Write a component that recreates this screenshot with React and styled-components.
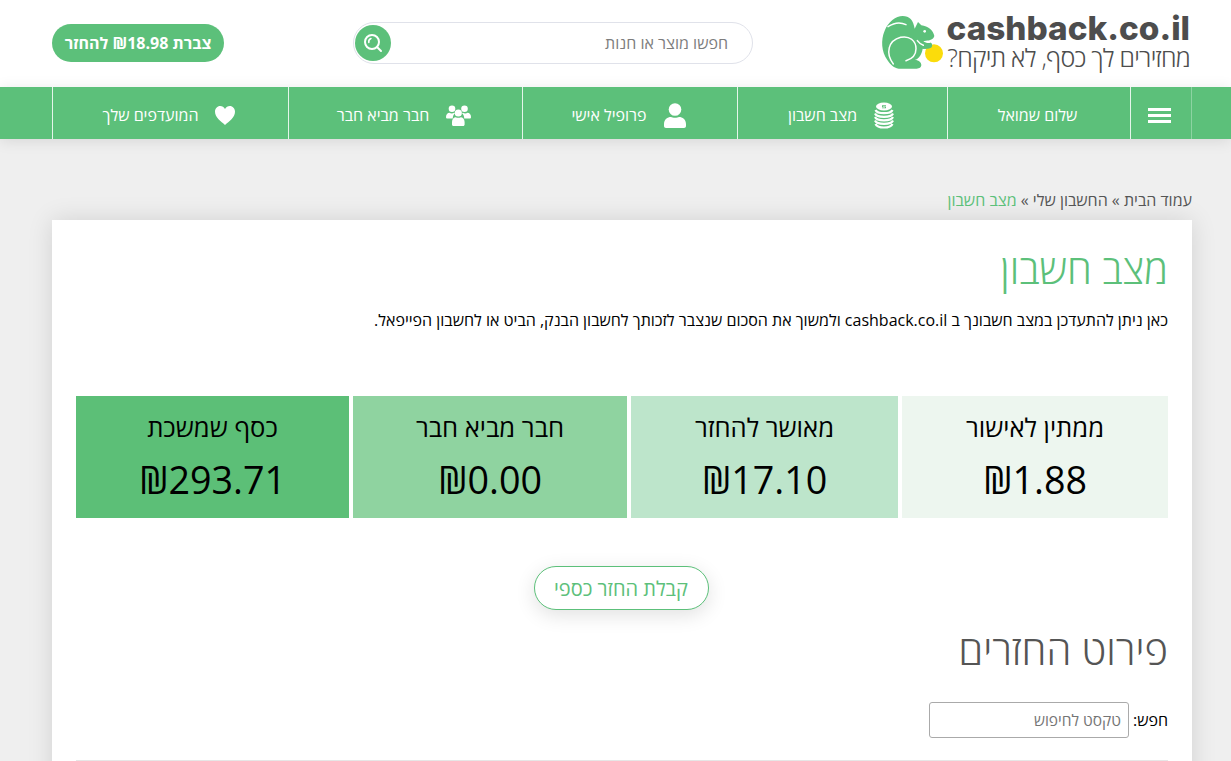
import React from 'react'
import styled, { createGlobalStyle } from 'styled-components'

const green = '#5cc07a'
const font = `"Open Sans", "Noto Sans", "Liberation Sans", sans-serif`

const Global = createGlobalStyle`
  html, body { margin: 0; padding: 0; height: 761px; overflow: hidden; background: #efefef; }
  body { font-family: ${font}; font-size: 16px; color: #000; }
  * { box-sizing: border-box; }
`

const Page = styled.div`
  direction: rtl;
  width: 1231px;
  height: 761px;
  overflow: hidden;
`

const Container = styled.div`
  width: 1140px;
  margin-right: 39px;
  display: flex;
  align-items: center;
`

const Header = styled.header`
  height: 87px;
  background: #fff;
  & > div { height: 87px; justify-content: space-between; }
`

const Logo = styled.a`
  display: flex;
  align-items: flex-start;
  width: 310px;
  height: 87px;
  direction: ltr;
`

const LogoMark = styled.svg`
  width: 64px;
  height: 65px;
  margin: 10px 0 0 -2px;
  flex: none;
`

const LogoText = styled.div`
  display: flex;
  flex-direction: column;
  align-items: flex-end;
  margin-left: 3px;
  width: 243px;
`

const LogoName = styled.span`
  font-family: Inter, "Open Sans", sans-serif;
  font-weight: 800;
  font-size: 33.3px;
  line-height: 28px;
  height: 28px;
  margin-top: 14px;
  color: #4d4d4d;
  white-space: nowrap;
`

const LogoSlogan = styled.span`
  font-weight: 300;
  font-size: 25px;
  line-height: 28px;
  margin-top: 1px;
  letter-spacing: -0.72px;
  color: #4d4d4d;
  direction: rtl;
  white-space: nowrap;
`

const Search = styled.form`
  width: 400px;
  height: 42px;
  margin-top: -1px;
  border: 1px solid #e0e2ea;
  border-radius: 21px;
  background: #fff;
  display: flex;
  align-items: center;
  justify-content: space-between;
  padding: 0 24px 0 1px;
`

const SearchText = styled.span`
  font-size: 16px;
  color: #7d7d7d;
`

const SearchButton = styled.span`
  width: 36px;
  height: 36px;
  border-radius: 50%;
  background: ${green};
  display: flex;
  align-items: center;
  justify-content: center;
`

const Balance = styled.a`
  width: 172px;
  height: 38px;
  margin-top: -1px;
  border-radius: 19px;
  background: ${green};
  color: #fff;
  font-weight: 700;
  font-size: 16px;
  display: flex;
  align-items: center;
  justify-content: center;
  white-space: nowrap;
`

const Nav = styled.nav`
  height: 52px;
  background: ${green};
  box-shadow: 0 2px 14px rgba(0, 0, 0, 0.1);
  & > div { height: 52px; align-items: stretch; border-right: 1px solid rgba(255, 255, 255, 0.3); }
`

const NavItem = styled.a`
  width: ${p => p.$w}px;
  flex: none;
  display: flex;
  align-items: center;
  justify-content: center;
  gap: 17px;
  padding: 4px 3px 0 0;
  color: #fff;
  font-size: 16px;
  border-left: 1px solid #e5f5ea;
  svg { flex: none; }
`

const Burger = styled.span`
  width: 23px;
  height: 15px;
  border-top: 3px solid #fff;
  border-bottom: 3px solid #fff;
  position: relative;
  &::after {
    content: '';
    position: absolute;
    left: 0;
    right: 0;
    top: 3px;
    height: 3px;
    background: #fff;
  }
`

const Crumbs = styled.div`
  height: 81px;
  padding-top: 50px;
  font-size: 16px;
  line-height: 22px;
  color: #555;
  width: 1140px;
  margin-right: 39px;
  white-space: nowrap;
`

const Current = styled.span`
  color: ${green};
`

const Card = styled.main`
  width: 1140px;
  margin-right: 39px;
  height: 600px;
  background: #fff;
  box-shadow: 0 0 24px rgba(0, 0, 0, 0.12);
  padding: 24px 24px 0;
`

const Title = styled.h1`
  margin: 0;
  font-weight: 300;
  font-size: 40px;
  line-height: 50px;
  color: ${p => p.$muted ? '#555' : green};
`

const Intro = styled.p`
  margin: 14px 0 0;
  font-size: 16px;
  line-height: 24px;
  color: #000;
`

const Stats = styled.div`
  display: flex;
  gap: 4px;
  margin-top: 64px;
`

const Stat = styled.div`
  width: ${p => p.$w}px;
  height: 122px;
  background: ${p => p.$bg};
  text-align: center;
  padding-top: 14px;
  color: #000;
`

const StatLabel = styled.div`
  font-size: 25.6px;
  line-height: 36px;
`

const StatValue = styled.div`
  font-size: 37.7px;
  line-height: 50px;
  margin-top: 9px;
`

const Action = styled.div`
  display: flex;
  justify-content: center;
  margin-top: 48px;
`

const Withdraw = styled.a`
  width: 175px;
  height: 44px;
  margin-right: 2px;
  border: 1px solid ${green};
  border-radius: 22px;
  background: #fff;
  color: ${green};
  font-size: 20px;
  display: flex;
  align-items: center;
  justify-content: center;
  box-shadow: 0 5px 20px rgba(0, 0, 0, 0.12);
`

const SubTitle = styled(Title)`
  margin-top: 15px;
`

const Filter = styled.label`
  display: flex;
  align-items: center;
  gap: 4px;
  margin-top: 27px;
  font-size: 16px;
  height: 36px;
`

const FilterInput = styled.input`
  width: 200px;
  height: 36px;
  border: 1px solid #aaa;
  border-radius: 3px;
  padding: 0 7px;
  font: 15.5px ${font};
  direction: rtl;
  &::placeholder { color: #757575; }
`

const Divider = styled.div`
  height: 1px;
  background: #e6e6e6;
  margin-top: 22px;
`

const Squirrel = () => (
  <LogoMark viewBox="0 0 192 195">
    <path fill={green} d="M22 150C4 125 2 90 14 62 24 36 48 18 68 18 88 18 100 30 104 56L114 36 124 46C144 48 160 62 163 78 160 88 150 92 138 92L130 94C136 100 146 100 152 98 160 104 158 116 142 116L128 116C126 130 118 146 104 150 118 150 124 158 124 166 124 172 118 176 110 176L56 176C40 174 30 162 22 150Z" />
    <circle cx="162" cy="130" r="27" fill="#fbdc0b" />
    <path fill={green} d="M128 96C136 100 146 100 152 98 160 104 158 116 142 116L128 116Z" />
    <path fill="none" stroke="#fff" strokeWidth="4.500" strokeLinecap="round" d="M24 50C42 38 62 36 78 44M40 162C16 130 24 92 62 82 88 76 108 92 108 116 108 132 98 146 78 152M112 92C118 100 124 104 130 106" />
    <circle cx="134" cy="64" r="4" fill="#fff" />
  </LogoMark>
)

const Coins = () => (
  <svg width="20" height="27" viewBox="0 0 20 27">
    <ellipse cx="10" cy="4.500" rx="8" ry="4" fill="#fff" />
    <path fill="none" stroke="#fff" strokeWidth="2.200" d="M1.500 8c1 2.200 4.500 3.200 8.500 3.200s7.500-1 8.500-3.200M1 11.500c1 2.200 5 3.300 9 3.300s8-1.100 9-3.300M1 15c1 2.200 5 3.300 9 3.300s8-1.100 9-3.300M1 18.500c1 2.200 5 3.300 9 3.300s8-1.100 9-3.300M1.500 22c1 2.200 4.500 3.500 8.500 3.500s7.500-1.300 8.500-3.500" />
    <path fill={green} d="M8 3.200h4v.8H9v.5h3v1.700H8v-.8h3v-.5H8z" />
  </svg>
)

const UserIcon = () => (
  <svg width="22" height="25" viewBox="0 0 22 25" fill="#fff">
    <circle cx="11" cy="6.500" r="6.300" />
    <path d="M0 21c0-4.500 3.500-7 7-7 1.500 1 6.500 1 8 0 3.500 0 7 2.500 7 7v2c0 1-.8 2-2 2H2c-1.200 0-2-1-2-2z" />
  </svg>
)

const UsersIcon = () => (
  <svg width="25" height="21" viewBox="0 0 25 21" fill="#fff">
    <circle cx="6" cy="3.800" r="3.300" />
    <circle cx="18.500" cy="3.800" r="3.300" />
    <path d="M0 12c0-2.500 1.500-4.200 3.500-4.200 1 .8 3.500.8 4.500 0l1 .5c-1.500 1.200-2.200 2.800-2.200 5.200H1.500C.5 13.500 0 13 0 12zM25 12c0-2.500-1.500-4.200-3.500-4.200-1 .8-3.500.8-4.500 0l-1 .5c1.500 1.200 2.200 2.800 2.200 5.200h5.300c1 0 1.500-.5 1.500-1.500z" />
    <circle cx="12.300" cy="8" r="3.600" />
    <path d="M6 17c0-3 2-4.800 3.800-4.800 1.200.8 3.800.8 5 0 1.800 0 3.800 1.800 3.800 4.800v2.500c0 .9-.6 1.500-1.500 1.500h-9.600c-.9 0-1.500-.6-1.500-1.500z" />
  </svg>
)

const HeartIcon = () => (
  <svg width="20" height="19" viewBox="0 0 20 19" fill="#fff">
    <path d="M10 19C6 15.500 0 11.500 0 5.800 0 2.500 2.300 0 5.200 0 7.200 0 9 1 10 3 11 1 12.800 0 14.800 0 17.700 0 20 2.500 20 5.800 20 11.500 14 15.500 10 19Z" />
  </svg>
)

const SearchIcon = () => (
  <svg width="20" height="20" viewBox="0 0 20 20" fill="none" stroke="#fff">
    <circle cx="9" cy="9" r="7" strokeWidth="2" />
    <path d="M14 14l4 4" strokeWidth="2" strokeLinecap="round" />
    <path d="M8 5.500C6.500 6 5.500 7.500 5.800 9.500" strokeWidth="1.500" strokeLinecap="round" />
  </svg>
)

export default function App() {
  return (
    <Page>
      <Global />
      <Header>
        <Container>
          <Logo>
            <Squirrel />
            <LogoText>
              <LogoName>cashback.co.il</LogoName>
              <LogoSlogan>מחזירים לך כסף, לא תיקח?</LogoSlogan>
            </LogoText>
          </Logo>
          <Search>
            <SearchText>חפשו מוצר או חנות</SearchText>
            <SearchButton><SearchIcon /></SearchButton>
          </Search>
          <Balance>צברת ₪18.98 להחזר</Balance>
        </Container>
      </Header>
      <Nav>
        <Container>
          <NavItem $w={61}><Burger /></NavItem>
          <NavItem $w={183}>שלום שמואל</NavItem>
          <NavItem $w={210}><Coins />מצב חשבון</NavItem>
          <NavItem $w={215}><UserIcon />פרופיל אישי</NavItem>
          <NavItem $w={234}><UsersIcon />חבר מביא חבר</NavItem>
          <NavItem $w={236}><HeartIcon />המועדפים שלך</NavItem>
        </Container>
      </Nav>
      <Crumbs>עמוד הבית » החשבון שלי » <Current>מצב חשבון</Current></Crumbs>
      <Card>
        <Title>מצב חשבון</Title>
        <Intro>כאן ניתן להתעדכן במצב חשבונך ב cashback.co.il ולמשוך את הסכום שנצבר לזכותך לחשבון הבנק, הביט או לחשבון הפייפאל.</Intro>
        <Stats>
          <Stat $w={266} $bg="#edf6ef"><StatLabel>ממתין לאישור</StatLabel><StatValue>₪1.88</StatValue></Stat>
          <Stat $w={267} $bg="#bde5cb"><StatLabel>מאושר להחזר</StatLabel><StatValue>₪17.10</StatValue></Stat>
          <Stat $w={274} $bg="#8fd3a0"><StatLabel>חבר מביא חבר</StatLabel><StatValue>₪0.00</StatValue></Stat>
          <Stat $w={273} $bg="#5cbf77"><StatLabel>כסף שמשכת</StatLabel><StatValue>₪293.71</StatValue></Stat>
        </Stats>
        <Action><Withdraw>קבלת החזר כספי</Withdraw></Action>
        <SubTitle as="h2" $muted>פירוט החזרים</SubTitle>
        <Filter>חפש: <FilterInput placeholder="טקסט לחיפוש" /></Filter>
        <Divider />
      </Card>
    </Page>
  )
}
